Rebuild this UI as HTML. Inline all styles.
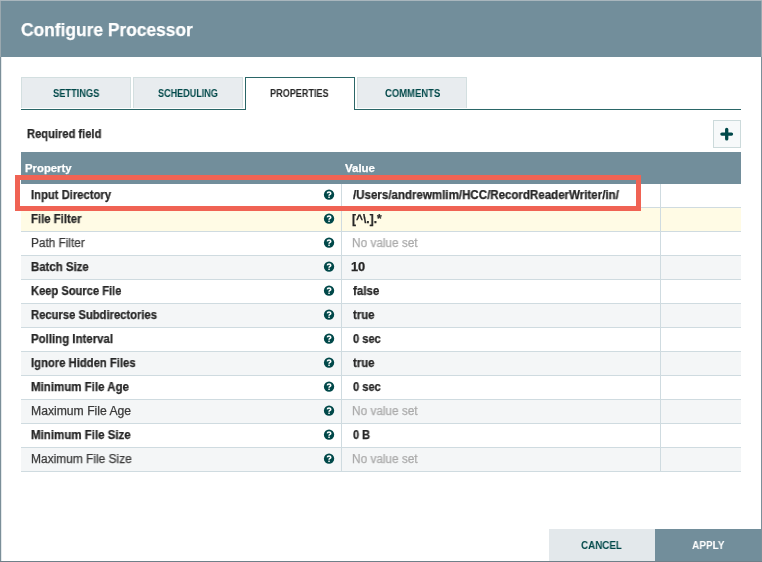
<!DOCTYPE html>
<html><head><meta charset="utf-8">
<style>
*{box-sizing:border-box;margin:0;padding:0}
html,body{width:762px;height:562px;overflow:hidden;background:#7b8f99;font-family:'Liberation Sans', sans-serif}
div,svg,span{position:absolute}
#toprow{left:0;top:0;width:762px;height:1px;background:#a9b6bd}
#botrow{left:0;top:561px;width:762px;height:1px;background:#6f8089}
#dlg{left:1px;top:1px;width:760px;height:560px;background:#fff;border-left:1px solid #e4e9eb}
#hdr{left:1px;top:1px;width:760px;height:56px;background:#728e9b}
.tab{top:77px;width:110px;height:31px;background:#e8ecef;border:1px solid #d3dfe0;border-bottom:none}
#tabline{left:21px;top:109px;width:720px;height:1px;background:#2a6667}
#sel{left:245px;top:77px;width:110px;height:33px;background:#fff;border:1px solid #2a6667;border-bottom:none}
#plus{left:713px;top:120px;width:28px;height:28px;border:1px solid #ccdadb;background:#f7f9fa}
#th{left:21px;top:152px;width:720px;height:32px;background:#728e9b}
.row{left:21px;width:720px;height:24px;border-bottom:1px solid #cfdbe0}
.d{top:184px;width:1px;height:288px;background:#cfdbe0}
.q{left:323px}
#redbox{left:15px;top:175px;width:626px;height:36px;border:5px solid #f06354}
#cancel{left:549px;top:529px;width:106px;height:32px;background:#e3e8eb}
#apply{left:655px;top:529px;width:106px;height:32px;background:#728e9b}
.t{white-space:nowrap;transform-origin:0 0;will-change:transform}
</style></head><body>
<div id="toprow"></div><div id="botrow"></div><div style="left:0;top:1px;width:1px;height:56px;background:#9aa8af"></div><div style="left:761px;top:1px;width:1px;height:56px;background:#9aa8af"></div>
<div id="dlg"></div>
<div id="hdr"></div>
<div id="tabline"></div>
<div class="tab" style="left:21px"></div>
<div class="tab" style="left:133px"></div>
<div id="sel"></div>
<div class="tab" style="left:357px"></div>
<div id="plus"><svg style="left:6px;top:6px" width="14" height="14" viewBox="0 0 14 14"><path d="M6.7 2.3V11.9M1.9 7.1H11.5" stroke="#004849" stroke-width="3.3" stroke-linecap="round"/></svg></div>
<div id="th"></div>
<div class="row" style="top:184px;background:#fff"></div><svg class="q" style="top:189px" width="12" height="12" viewBox="0 0 12 12"><circle cx="6.05" cy="5.65" r="5.15" fill="#004849"/><path d="M4.35 4.35 Q4.45 2.95 6.05 2.95 Q7.75 2.95 7.75 4.25 Q7.75 5.15 6.75 5.65 Q6.05 6.05 6.05 6.85" fill="none" stroke="#fff" stroke-width="1.6"/><rect x="5.25" y="7.6" width="1.6" height="1.3" fill="#fff"/></svg><div class="row" style="top:208px;background:#fffbe5"></div><svg class="q" style="top:213px" width="12" height="12" viewBox="0 0 12 12"><circle cx="6.05" cy="5.65" r="5.15" fill="#004849"/><path d="M4.35 4.35 Q4.45 2.95 6.05 2.95 Q7.75 2.95 7.75 4.25 Q7.75 5.15 6.75 5.65 Q6.05 6.05 6.05 6.85" fill="none" stroke="#fff" stroke-width="1.6"/><rect x="5.25" y="7.6" width="1.6" height="1.3" fill="#fff"/></svg><div class="row" style="top:232px;background:#fff"></div><svg class="q" style="top:237px" width="12" height="12" viewBox="0 0 12 12"><circle cx="6.05" cy="5.65" r="5.15" fill="#004849"/><path d="M4.35 4.35 Q4.45 2.95 6.05 2.95 Q7.75 2.95 7.75 4.25 Q7.75 5.15 6.75 5.65 Q6.05 6.05 6.05 6.85" fill="none" stroke="#fff" stroke-width="1.6"/><rect x="5.25" y="7.6" width="1.6" height="1.3" fill="#fff"/></svg><div class="row" style="top:256px;background:#f4f6f7"></div><svg class="q" style="top:261px" width="12" height="12" viewBox="0 0 12 12"><circle cx="6.05" cy="5.65" r="5.15" fill="#004849"/><path d="M4.35 4.35 Q4.45 2.95 6.05 2.95 Q7.75 2.95 7.75 4.25 Q7.75 5.15 6.75 5.65 Q6.05 6.05 6.05 6.85" fill="none" stroke="#fff" stroke-width="1.6"/><rect x="5.25" y="7.6" width="1.6" height="1.3" fill="#fff"/></svg><div class="row" style="top:280px;background:#fff"></div><svg class="q" style="top:285px" width="12" height="12" viewBox="0 0 12 12"><circle cx="6.05" cy="5.65" r="5.15" fill="#004849"/><path d="M4.35 4.35 Q4.45 2.95 6.05 2.95 Q7.75 2.95 7.75 4.25 Q7.75 5.15 6.75 5.65 Q6.05 6.05 6.05 6.85" fill="none" stroke="#fff" stroke-width="1.6"/><rect x="5.25" y="7.6" width="1.6" height="1.3" fill="#fff"/></svg><div class="row" style="top:304px;background:#f4f6f7"></div><svg class="q" style="top:309px" width="12" height="12" viewBox="0 0 12 12"><circle cx="6.05" cy="5.65" r="5.15" fill="#004849"/><path d="M4.35 4.35 Q4.45 2.95 6.05 2.95 Q7.75 2.95 7.75 4.25 Q7.75 5.15 6.75 5.65 Q6.05 6.05 6.05 6.85" fill="none" stroke="#fff" stroke-width="1.6"/><rect x="5.25" y="7.6" width="1.6" height="1.3" fill="#fff"/></svg><div class="row" style="top:328px;background:#fff"></div><svg class="q" style="top:333px" width="12" height="12" viewBox="0 0 12 12"><circle cx="6.05" cy="5.65" r="5.15" fill="#004849"/><path d="M4.35 4.35 Q4.45 2.95 6.05 2.95 Q7.75 2.95 7.75 4.25 Q7.75 5.15 6.75 5.65 Q6.05 6.05 6.05 6.85" fill="none" stroke="#fff" stroke-width="1.6"/><rect x="5.25" y="7.6" width="1.6" height="1.3" fill="#fff"/></svg><div class="row" style="top:352px;background:#f4f6f7"></div><svg class="q" style="top:357px" width="12" height="12" viewBox="0 0 12 12"><circle cx="6.05" cy="5.65" r="5.15" fill="#004849"/><path d="M4.35 4.35 Q4.45 2.95 6.05 2.95 Q7.75 2.95 7.75 4.25 Q7.75 5.15 6.75 5.65 Q6.05 6.05 6.05 6.85" fill="none" stroke="#fff" stroke-width="1.6"/><rect x="5.25" y="7.6" width="1.6" height="1.3" fill="#fff"/></svg><div class="row" style="top:376px;background:#fff"></div><svg class="q" style="top:381px" width="12" height="12" viewBox="0 0 12 12"><circle cx="6.05" cy="5.65" r="5.15" fill="#004849"/><path d="M4.35 4.35 Q4.45 2.95 6.05 2.95 Q7.75 2.95 7.75 4.25 Q7.75 5.15 6.75 5.65 Q6.05 6.05 6.05 6.85" fill="none" stroke="#fff" stroke-width="1.6"/><rect x="5.25" y="7.6" width="1.6" height="1.3" fill="#fff"/></svg><div class="row" style="top:400px;background:#f4f6f7"></div><svg class="q" style="top:405px" width="12" height="12" viewBox="0 0 12 12"><circle cx="6.05" cy="5.65" r="5.15" fill="#004849"/><path d="M4.35 4.35 Q4.45 2.95 6.05 2.95 Q7.75 2.95 7.75 4.25 Q7.75 5.15 6.75 5.65 Q6.05 6.05 6.05 6.85" fill="none" stroke="#fff" stroke-width="1.6"/><rect x="5.25" y="7.6" width="1.6" height="1.3" fill="#fff"/></svg><div class="row" style="top:424px;background:#fff"></div><svg class="q" style="top:429px" width="12" height="12" viewBox="0 0 12 12"><circle cx="6.05" cy="5.65" r="5.15" fill="#004849"/><path d="M4.35 4.35 Q4.45 2.95 6.05 2.95 Q7.75 2.95 7.75 4.25 Q7.75 5.15 6.75 5.65 Q6.05 6.05 6.05 6.85" fill="none" stroke="#fff" stroke-width="1.6"/><rect x="5.25" y="7.6" width="1.6" height="1.3" fill="#fff"/></svg><div class="row" style="top:448px;background:#f4f6f7"></div><svg class="q" style="top:453px" width="12" height="12" viewBox="0 0 12 12"><circle cx="6.05" cy="5.65" r="5.15" fill="#004849"/><path d="M4.35 4.35 Q4.45 2.95 6.05 2.95 Q7.75 2.95 7.75 4.25 Q7.75 5.15 6.75 5.65 Q6.05 6.05 6.05 6.85" fill="none" stroke="#fff" stroke-width="1.6"/><rect x="5.25" y="7.6" width="1.6" height="1.3" fill="#fff"/></svg>
<div class="d" style="left:341px"></div>
<div class="d" style="left:660px"></div>
<div id="cancel"></div><div id="apply"></div>
<span class="t" style="left:20.54px;top:21px;font-family:'Liberation Sans', sans-serif;font-size:18px;line-height:18px;font-weight:bold;color:#fff;transform:scaleX(0.9650);-webkit-text-stroke:0.25px currentColor">Configure Processor</span><span class="t" style="left:52.90px;top:89px;font-family:'Liberation Sans', sans-serif;font-size:10px;line-height:10px;font-weight:bold;color:#004849;transform:scaleX(0.9280);-webkit-text-stroke:0px currentColor">SETTINGS</span><span class="t" style="left:158.20px;top:89px;font-family:'Liberation Sans', sans-serif;font-size:10px;line-height:10px;font-weight:bold;color:#004849;transform:scaleX(0.9061);-webkit-text-stroke:0px currentColor">SCHEDULING</span><span class="t" style="left:270.49px;top:89px;font-family:'Liberation Sans', sans-serif;font-size:10px;line-height:10px;font-weight:bold;color:#262626;transform:scaleX(0.9095);-webkit-text-stroke:0px currentColor">PROPERTIES</span><span class="t" style="left:384.60px;top:89px;font-family:'Liberation Sans', sans-serif;font-size:10px;line-height:10px;font-weight:bold;color:#004849;transform:scaleX(0.9466);-webkit-text-stroke:0px currentColor">COMMENTS</span><span class="t" style="left:26.97px;top:128px;font-family:'Liberation Sans', sans-serif;font-size:12px;line-height:12px;font-weight:bold;color:#262626;transform:scaleX(0.9291);-webkit-text-stroke:0.25px currentColor">Required field</span><span class="t" style="left:24.87px;top:163px;font-family:'Liberation Sans', sans-serif;font-size:11px;line-height:11px;font-weight:bold;color:#fff;transform:scaleX(1.0295);-webkit-text-stroke:0.25px currentColor">Property</span><span class="t" style="left:345.40px;top:163px;font-family:'Liberation Sans', sans-serif;font-size:11px;line-height:11px;font-weight:bold;color:#fff;transform:scaleX(1.0429);-webkit-text-stroke:0.25px currentColor">Value</span><span class="t" style="left:581.25px;top:540px;font-family:'Liberation Sans', sans-serif;font-size:11px;line-height:11px;font-weight:bold;color:#004849;transform:scaleX(0.8924);-webkit-text-stroke:0px currentColor">CANCEL</span><span class="t" style="left:692.00px;top:540px;font-family:'Liberation Sans', sans-serif;font-size:11px;line-height:11px;font-weight:bold;color:#fff;transform:scaleX(0.9143);-webkit-text-stroke:0px currentColor">APPLY</span><span class="t" style="left:30.96px;top:189px;font-family:'Liberation Sans', sans-serif;font-size:12px;line-height:12px;font-weight:bold;color:#262626;transform:scaleX(0.9369);-webkit-text-stroke:0.25px currentColor">Input Directory</span><span class="t" style="left:352.50px;top:189px;font-family:'Liberation Sans', sans-serif;font-size:12px;line-height:12px;font-weight:bold;color:#262626;transform:scaleX(0.9614);-webkit-text-stroke:0.25px currentColor">/Users/andrewmlim/HCC/RecordReaderWriter/in/</span><span class="t" style="left:30.95px;top:213px;font-family:'Liberation Sans', sans-serif;font-size:12px;line-height:12px;font-weight:bold;color:#262626;transform:scaleX(0.9462);-webkit-text-stroke:0.25px currentColor">File Filter</span><span class="t" style="left:351.50px;top:213px;font-family:'Liberation Sans', sans-serif;font-size:12px;line-height:12px;font-weight:bold;color:#262626;transform:scaleX(0.9966);-webkit-text-stroke:0.25px currentColor">[^\.].*</span><span class="t" style="left:30.92px;top:237px;font-family:'Liberation Sans', sans-serif;font-size:12px;line-height:12px;font-weight:normal;color:#3a3a3a;transform:scaleX(0.9833);-webkit-text-stroke:0.25px currentColor">Path Filter</span><span class="t" style="left:351.52px;top:237px;font-family:'Liberation Sans', sans-serif;font-size:12px;line-height:12px;font-weight:normal;color:#aaaaaa;transform:scaleX(0.9833);-webkit-text-stroke:0.25px currentColor">No value set</span><span class="t" style="left:30.95px;top:261px;font-family:'Liberation Sans', sans-serif;font-size:12px;line-height:12px;font-weight:bold;color:#262626;transform:scaleX(0.9508);-webkit-text-stroke:0.25px currentColor">Batch Size</span><span class="t" style="left:351.43px;top:261px;font-family:'Liberation Sans', sans-serif;font-size:12px;line-height:12px;font-weight:bold;color:#262626;transform:scaleX(1.0667);-webkit-text-stroke:0.25px currentColor">10</span><span class="t" style="left:30.97px;top:285px;font-family:'Liberation Sans', sans-serif;font-size:12px;line-height:12px;font-weight:bold;color:#262626;transform:scaleX(0.9281);-webkit-text-stroke:0.25px currentColor">Keep Source File</span><span class="t" style="left:352.50px;top:285px;font-family:'Liberation Sans', sans-serif;font-size:12px;line-height:12px;font-weight:bold;color:#262626;transform:scaleX(0.9593);-webkit-text-stroke:0.25px currentColor">false</span><span class="t" style="left:30.96px;top:309px;font-family:'Liberation Sans', sans-serif;font-size:12px;line-height:12px;font-weight:bold;color:#262626;transform:scaleX(0.9353);-webkit-text-stroke:0.25px currentColor">Recurse Subdirectories</span><span class="t" style="left:352.50px;top:309px;font-family:'Liberation Sans', sans-serif;font-size:12px;line-height:12px;font-weight:bold;color:#262626;transform:scaleX(0.9455);-webkit-text-stroke:0.25px currentColor">true</span><span class="t" style="left:30.95px;top:333px;font-family:'Liberation Sans', sans-serif;font-size:12px;line-height:12px;font-weight:bold;color:#262626;transform:scaleX(0.9536);-webkit-text-stroke:0.25px currentColor">Polling Interval</span><span class="t" style="left:352.50px;top:333px;font-family:'Liberation Sans', sans-serif;font-size:12px;line-height:12px;font-weight:bold;color:#262626;transform:scaleX(0.9233);-webkit-text-stroke:0.25px currentColor">0 sec</span><span class="t" style="left:30.96px;top:357px;font-family:'Liberation Sans', sans-serif;font-size:12px;line-height:12px;font-weight:bold;color:#262626;transform:scaleX(0.9391);-webkit-text-stroke:0.25px currentColor">Ignore Hidden Files</span><span class="t" style="left:352.50px;top:357px;font-family:'Liberation Sans', sans-serif;font-size:12px;line-height:12px;font-weight:bold;color:#262626;transform:scaleX(0.9455);-webkit-text-stroke:0.25px currentColor">true</span><span class="t" style="left:30.94px;top:381px;font-family:'Liberation Sans', sans-serif;font-size:12px;line-height:12px;font-weight:bold;color:#262626;transform:scaleX(0.9584);-webkit-text-stroke:0.25px currentColor">Minimum File Age</span><span class="t" style="left:352.50px;top:381px;font-family:'Liberation Sans', sans-serif;font-size:12px;line-height:12px;font-weight:bold;color:#262626;transform:scaleX(0.9233);-webkit-text-stroke:0.25px currentColor">0 sec</span><span class="t" style="left:30.89px;top:405px;font-family:'Liberation Sans', sans-serif;font-size:12px;line-height:12px;font-weight:normal;color:#3a3a3a;transform:scaleX(1.0144);-webkit-text-stroke:0.25px currentColor">Maximum File Age</span><span class="t" style="left:351.52px;top:405px;font-family:'Liberation Sans', sans-serif;font-size:12px;line-height:12px;font-weight:normal;color:#aaaaaa;transform:scaleX(0.9833);-webkit-text-stroke:0.25px currentColor">No value set</span><span class="t" style="left:30.94px;top:429px;font-family:'Liberation Sans', sans-serif;font-size:12px;line-height:12px;font-weight:bold;color:#262626;transform:scaleX(0.9592);-webkit-text-stroke:0.25px currentColor">Minimum File Size</span><span class="t" style="left:352.50px;top:429px;font-family:'Liberation Sans', sans-serif;font-size:12px;line-height:12px;font-weight:bold;color:#262626;transform:scaleX(0.9111);-webkit-text-stroke:0.25px currentColor">0 B</span><span class="t" style="left:30.91px;top:453px;font-family:'Liberation Sans', sans-serif;font-size:12px;line-height:12px;font-weight:normal;color:#3a3a3a;transform:scaleX(0.9940);-webkit-text-stroke:0.25px currentColor">Maximum File Size</span><span class="t" style="left:351.52px;top:453px;font-family:'Liberation Sans', sans-serif;font-size:12px;line-height:12px;font-weight:normal;color:#aaaaaa;transform:scaleX(0.9833);-webkit-text-stroke:0.25px currentColor">No value set</span>
<div id="redbox"></div>
</body></html>
